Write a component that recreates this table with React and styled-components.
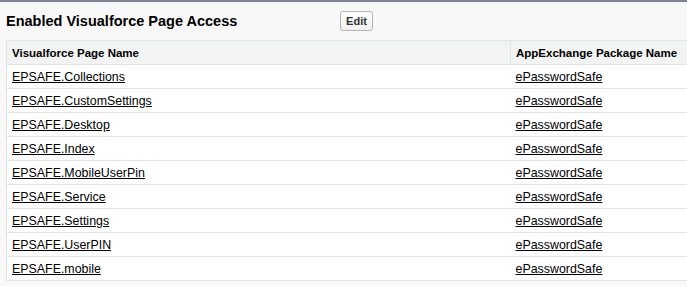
import React from 'react';
import styled, { createGlobalStyle } from 'styled-components';

const GlobalStyle = createGlobalStyle`
  html, body {
    margin: 0;
    padding: 0;
    background: #f8f8f8;
    font-family: "Liberation Sans", Arial, sans-serif;
  }
`;

const Page = styled.div`
  width: 687px;
  height: 286px;
  overflow: hidden;
  background: #f8f8f8;
  border-top: 2px solid #7d8297;
  box-sizing: border-box;
`;

const TitleBar = styled.div`
  display: flex;
  align-items: center;
  height: 38px;
  padding-left: 6px;
`;

const Title = styled.h2`
  margin: 0;
  width: 334px;
  font-size: 14.5px;
  font-weight: bold;
  color: #000;
`;

const Button = styled.button`
  font-family: "Liberation Sans", Arial, sans-serif;
  font-size: 11px;
  font-weight: bold;
  color: #333;
  height: 20px;
  width: 33px;
  padding: 0;
  border: 1px solid #b5b5b5;
  border-radius: 3px;
  background: linear-gradient(#fefefe, #f0f0f0);
`;

const Table = styled.table`
  margin-left: 6px;
  width: 700px;
  border-collapse: collapse;
  background: #fff;
  border: 1px solid #e0e3e5;
`;

const HeadCell = styled.th`
  height: 23px;
  padding: 0 0 0 5px;
  text-align: left;
  font-size: 11.5px;
  font-weight: bold;
  color: #000;
  background: #f2f3f3;
  border: 1px solid #e0e3e5;
  width: ${({ $w }) => $w || 'auto'};
`;

const Cell = styled.td`
  height: 23px;
  padding: 0 0 0 5px;
  font-size: 12.4px;
  border-top: 1px solid #e3e3e3;
  border-bottom: 1px solid #e3e3e3;
  vertical-align: middle;
`;

const LinkText = styled.a`
  color: #000;
  text-decoration: underline;
`;

const pages = [
  'EPSAFE.Collections',
  'EPSAFE.CustomSettings',
  'EPSAFE.Desktop',
  'EPSAFE.Index',
  'EPSAFE.MobileUserPin',
  'EPSAFE.Service',
  'EPSAFE.Settings',
  'EPSAFE.UserPIN',
  'EPSAFE.mobile',
];

export default function App() {
  return (
    <Page>
      <GlobalStyle />
      <TitleBar>
        <Title>Enabled Visualforce Page Access</Title>
        <Button>Edit</Button>
      </TitleBar>
      <Table>
        <thead>
          <tr>
            <HeadCell $w="498px">Visualforce Page Name</HeadCell>
            <HeadCell>AppExchange Package Name</HeadCell>
          </tr>
        </thead>
        <tbody>
          {pages.map((p) => (
            <tr key={p}>
              <Cell>
                <LinkText href="#">{p}</LinkText>
              </Cell>
              <Cell>
                <LinkText href="#">ePasswordSafe</LinkText>
              </Cell>
            </tr>
          ))}
        </tbody>
      </Table>
    </Page>
  );
}
